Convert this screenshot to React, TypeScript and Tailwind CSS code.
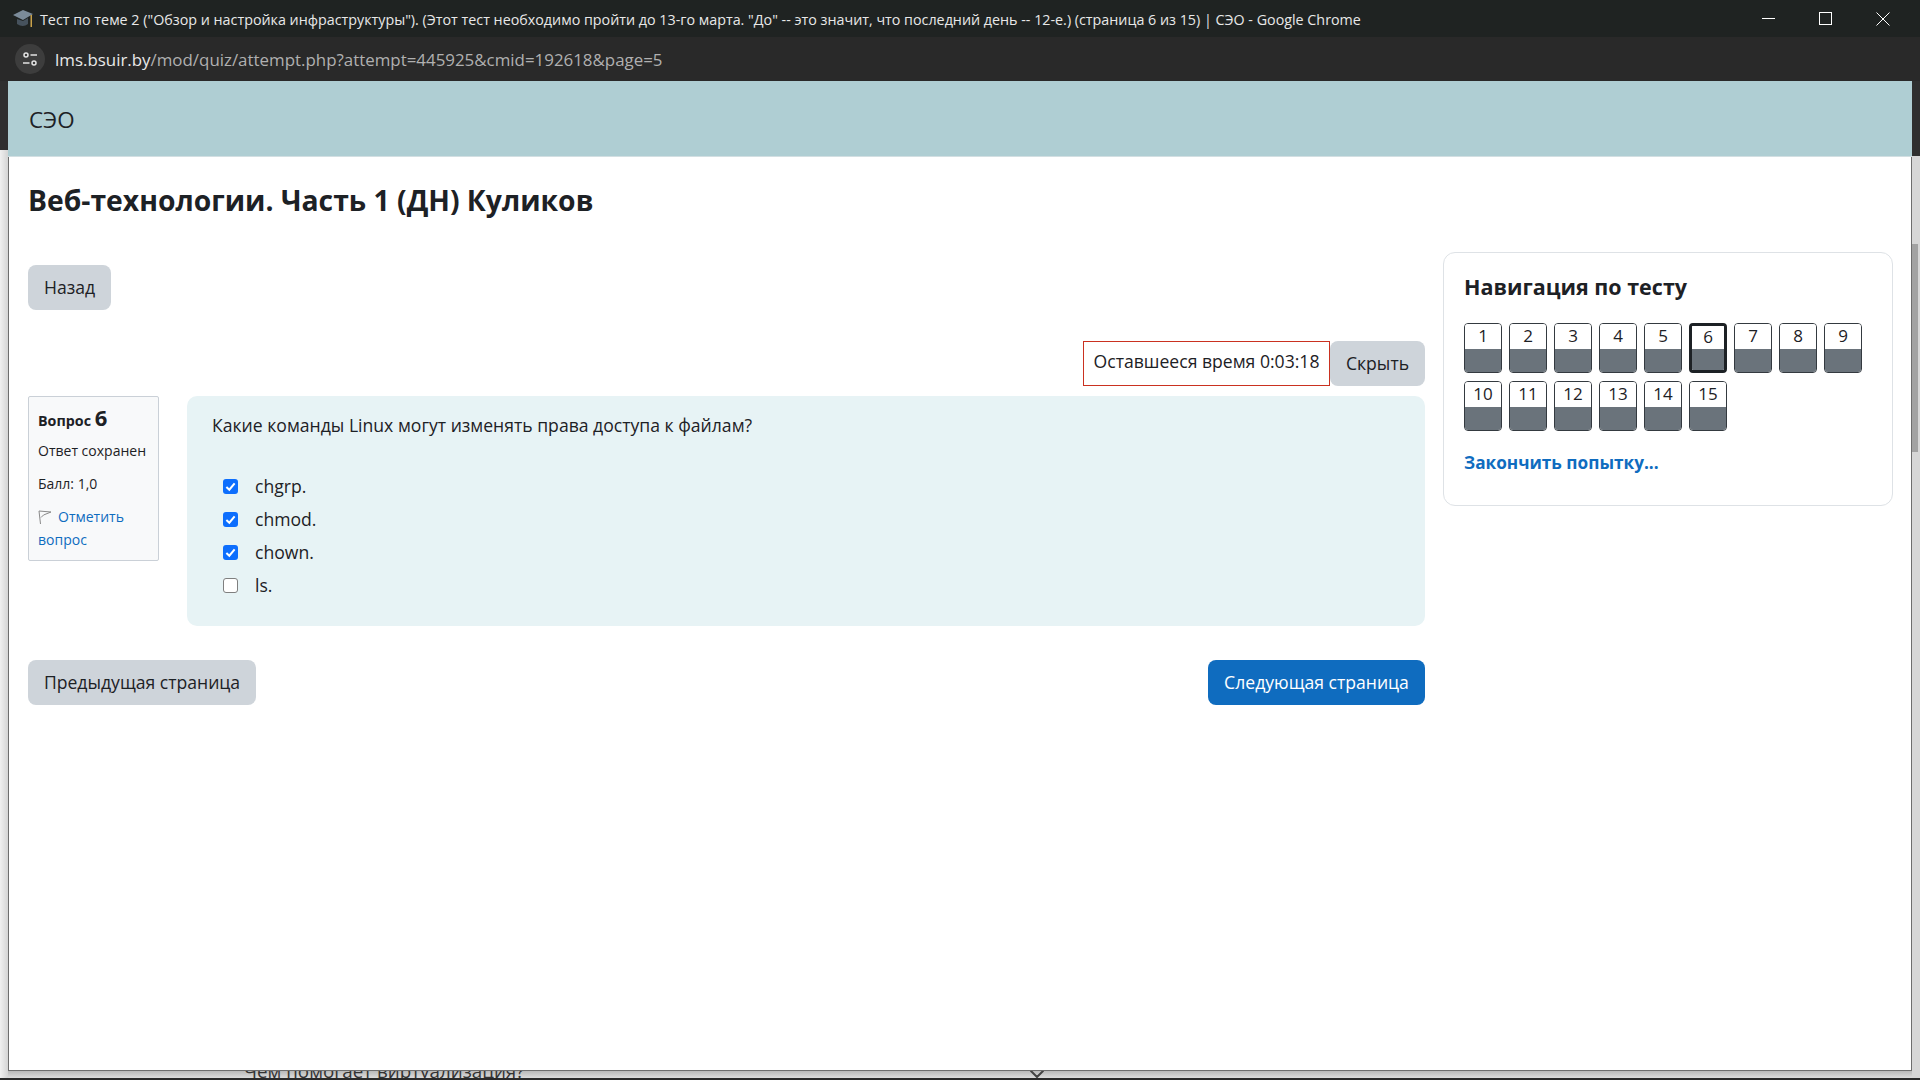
import React from "react";
import { ChevronDown } from "lucide-react";

const font = "font-['Open_Sans','Noto_Sans',sans-serif]";

const answers = [
    { label: "chgrp.", checked: true },
    { label: "chmod.", checked: true },
    { label: "chown.", checked: true },
    { label: "ls.", checked: false },
];

const navRows = [
    [1, 2, 3, 4, 5, 6, 7, 8, 9],
    [10, 11, 12, 13, 14, 15],
];

function GradCap() {
    return (
        <svg width="20" height="20" viewBox="0 0 20 20" className="shrink-0">
            <path d="M0 6 L10 1 L20 5 L10 11 Z" fill="#7b8b99" />
            <path d="M4 10 L4 15 Q10 19 15 15 L15 9 L10 12 Z" fill="#46525d" />
            <rect x="17.5" y="6" width="1.5" height="12" fill="#c9a24a" />
        </svg>
    );
}

function TuneIcon() {
    return (
        <svg width="16" height="16" viewBox="0 0 16 16" fill="none" stroke="#e3e3e3" strokeWidth="1.5">
            <circle cx="4" cy="4" r="2" />
            <path d="M8.5 4 H15" />
            <circle cx="12" cy="12" r="2" />
            <path d="M1 12 H7.5" />
        </svg>
    );
}

function Checkbox(props: { checked: boolean }) {
    if (!props.checked) {
        return <div className="w-[15px] h-[15px] rounded-[3px] border border-[#7f7f7f] bg-white shrink-0" />;
    }
    return (
        <div className="w-[15px] h-[15px] rounded-[3px] bg-[#0d6efd] flex items-center justify-center shrink-0">
            <svg width="11" height="11" viewBox="0 0 12 12" fill="none" stroke="white" strokeWidth="2.2">
                <path d="M1.5 6.5 L4.7 9.5 L10.5 2.5" />
            </svg>
        </div>
    );
}

function FlagIcon() {
    return (
        <svg width="14" height="15" viewBox="0 0 14 15" fill="none" stroke="#8a8a8a" strokeWidth="1" className="inline-block mr-[6px] align-[-3px]">
            <path d="M2.5 14 L1 1 L13 2 L5.5 5 L3 7.5" />
        </svg>
    );
}

function NavButton(props: { n: number; current: boolean }) {
    return (
        <div
            className={`w-[38px] h-[50px] rounded-[4px] overflow-hidden flex flex-col ${
                props.current ? "border-[3px] border-[#1d2125]" : "border border-[#343a40]"
            }`}
        >
            <div className="flex-1 bg-white flex items-center justify-center pb-[2px] text-[17px] leading-none text-[#1d2125]">
                {props.n}
            </div>
            <div className="flex-1 bg-[#6a737b]" />
        </div>
    );
}

export default function App() {
    return (
        <div className={`w-[1920px] h-[1080px] overflow-hidden flex flex-col bg-[#2a2a2a] ${font}`}>
            {/* title bar */}
            <div className="h-[37px] shrink-0 bg-[#1f2322] flex items-center pl-[13px] pr-[9px] text-white">
                <GradCap />
                <span className="ml-[7px] mt-[2px] text-[14.3px] whitespace-nowrap text-[#e8e8e8]">
                    Тест по теме 2 ("Обзор и настройка инфраструктуры"). (Этот тест необходимо пройти до 13-го марта. "До" -- это значит, что последний день -- 12-е.) (страница 6 из 15) | СЭО - Google Chrome
                </span>
                <div className="ml-auto flex">
                    <div className="w-[57px] flex justify-center">
                        <svg width="13" height="13" viewBox="0 0 13 13" stroke="white"><path d="M0 6.5 H13" /></svg>
                    </div>
                    <div className="w-[57px] flex justify-center">
                        <svg width="13" height="13" viewBox="0 0 13 13" fill="none" stroke="white"><rect x="0.5" y="0.5" width="12" height="12" /></svg>
                    </div>
                    <div className="w-[57px] flex justify-center">
                        <svg width="14" height="14" viewBox="0 0 14 14" stroke="white"><path d="M0.5 0.5 L13.5 13.5 M13.5 0.5 L0.5 13.5" /></svg>
                    </div>
                </div>
            </div>

            {/* address bar */}
            <div className="h-[44px] shrink-0 bg-[#292929] flex items-center pl-[15px]">
                <div className="w-[30px] h-[30px] rounded-full bg-[#3d3d3d] flex items-center justify-center">
                    <TuneIcon />
                </div>
                <span className="ml-[10px] mt-[2px] text-[16.9px] whitespace-nowrap text-[#b0b0b0]">
                    <span className="text-[#e8e8e8]">lms.bsuir.by</span>/mod/quiz/attempt.php?attempt=445925&cmid=192618&page=5
                </span>
            </div>

            <div className="flex-1 flex min-h-0">
                {/* page behind, left edge */}
                <div className="w-[8px] shrink-0 flex flex-col">
                    <div className="h-[69px] bg-[#2f2f2f]" />
                    <div className="flex-1 bg-gradient-to-r from-[#f0f0f0] to-[#d4d4d4]" />
                </div>

                {/* popup window */}
                <div className="flex-1 flex flex-col min-w-0">
                    <div className="flex-1 flex flex-col min-h-0 bg-white text-[#1d2125]">
                        <div className="h-[76px] shrink-0 bg-[#afced3] border-b border-[#d2dfe2] flex items-center pl-[21px] pt-[2px] text-[22.4px]">
                            СЭО
                        </div>
                        <div className="flex-1 border-x border-b border-[#6d6d6d] pl-[19px] pr-[18px]">
                            <h1 className="pt-[24px] text-[28.3px] leading-[38px] font-bold">
                                Веб-технологии. Часть 1 (ДН) Куликов
                            </h1>

                            <div className="mt-[33px] flex gap-[18px] items-start">
                                {/* left column */}
                                <div className="w-[1397px] shrink-0 pt-[13px] text-[17.6px]">
                                    <div className="w-[83px] h-[45px] rounded-[8px] bg-[#ced4da] flex items-center justify-center">
                                        Назад
                                    </div>

                                    <div className="mt-[31px] flex justify-end h-[45px]">
                                        <div className="w-[247px] border border-[#ca3120] flex items-center justify-center pb-[4px]">
                                            Оставшееся время 0:03:18
                                        </div>
                                        <div className="w-[95px] rounded-[8px] bg-[#ced4da] flex items-center justify-center">
                                            Скрыть
                                        </div>
                                    </div>

                                    <div className="mt-[10px] flex gap-[28px] items-start">
                                        <div className="w-[131px] h-[165px] shrink-0 bg-[#f8f9fa] border border-[#cad0d7] rounded-[2px] px-[9px] pt-[8px] text-[14px]">
                                            <div className="font-bold text-[14.3px] leading-[24px]">
                                                Вопрос <span className="text-[22px]">6</span>
                                            </div>
                                            <div className="mt-[6px] leading-[24px]">Ответ сохранен</div>
                                            <div className="mt-[9px] leading-[24px]">Балл: 1,0</div>
                                            <div className="mt-[9px] leading-[23px] text-[#0f6cbf]">
                                                <FlagIcon />
                                                Отметить вопрос
                                            </div>
                                        </div>

                                        <div className="flex-1 h-[230px] rounded-[10px] bg-[#e7f3f5] pl-[25px] pt-[16px]">
                                            <div className="leading-[26px]">
                                                Какие команды Linux могут изменять права доступа к файлам?
                                            </div>
                                            <div className="mt-[35px] ml-[11px] flex flex-col gap-[7px]">
                                                {answers.map((a, index) => (
                                                    <div key={index} className="flex items-center h-[26px]">
                                                        <Checkbox checked={a.checked} />
                                                        <span className="ml-[17px]">{a.label}</span>
                                                    </div>
                                                ))}
                                            </div>
                                        </div>
                                    </div>

                                    <div className="mt-[34px] flex justify-between">
                                        <div className="w-[228px] h-[45px] rounded-[8px] bg-[#ced4da] flex items-center justify-center">
                                            Предыдущая страница
                                        </div>
                                        <div className="w-[217px] h-[45px] rounded-[8px] bg-[#0f6cbf] text-white flex items-center justify-center">
                                            Следующая страница
                                        </div>
                                    </div>
                                </div>

                                {/* quiz navigation */}
                                <div className="flex-1 h-[254px] rounded-[12px] border border-[#dee2e6] pl-[20px] pt-[19px]">
                                    <div className="text-[21.5px] leading-[30px] font-bold">Навигация по тесту</div>
                                    <div className="mt-[21px] flex flex-col gap-[8px]">
                                        {navRows.map((row, index) => (
                                            <div key={index} className="flex gap-[7px]">
                                                {row.map((n) => (
                                                    <NavButton key={n} n={n} current={n === 6} />
                                                ))}
                                            </div>
                                        ))}
                                    </div>
                                    <div className="mt-[19px] text-[17.2px] leading-[26px] font-bold text-[#0f6cbf]">
                                        Закончить попытку...
                                    </div>
                                </div>
                            </div>
                        </div>
                    </div>

                    {/* page behind, bottom edge */}
                    <div className="h-[7px] shrink-0 overflow-hidden bg-gradient-to-b from-[#b9b9b9] to-[#dcdcdc] flex relative">
                        <span className="ml-[236px] -mt-[12px] text-[18.8px] leading-[24px] whitespace-nowrap text-[#333333]">
                            Чем помогает виртуализация?
                        </span>
                        <ChevronDown className="absolute left-[1017px] -top-[9px] w-[24px] h-[24px] text-[#444444]" />
                    </div>
                </div>

                {/* page behind, right edge */}
                <div className="w-[8px] shrink-0 flex flex-col bg-[#d6d6d6]">
                    <div className="h-[75px] bg-[#2f2f2f]" />
                    <div className="mt-[88px] w-[6px] h-[208px] bg-[#a2a2a2]" />
                </div>
            </div>

            <div className="h-[2px] shrink-0 bg-[#2a2a2a]" />
        </div>
    );
}
